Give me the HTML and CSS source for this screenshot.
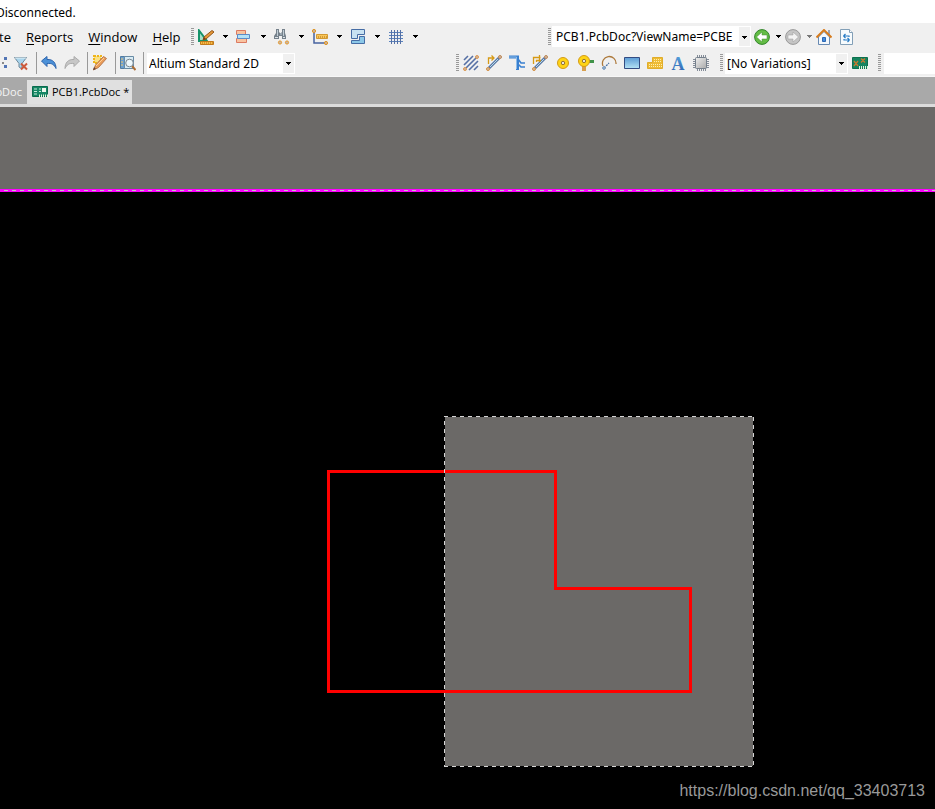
FILE: index.html
```html
<!DOCTYPE html>
<html lang="en">
<head>
<meta charset="utf-8">
<meta name="viewport" content="width=device-width, initial-scale=1">
<title>PCB1.PcbDoc</title>
<link rel="stylesheet" href="styles.css">
</head>
<body>
<svg class="defs" aria-hidden="true">
  <defs>
    <linearGradient id="blue" x1="0" y1="0" x2="0" y2="1"><stop offset="0" stop-color="#5b9bd5"/><stop offset="1" stop-color="#b5e3f5"/></linearGradient>
    <linearGradient id="ink" x1="0" y1="0" x2="0" y2="1"><stop offset="0" stop-color="#5aa7e0"/><stop offset="1" stop-color="#2b5fae"/></linearGradient>
    <linearGradient id="silver" x1="0" y1="0" x2="1" y2="1"><stop offset="0" stop-color="#eee"/><stop offset="1" stop-color="#aaa"/></linearGradient>
    <symbol id="arrow" viewBox="0 0 5 3"><path d="M0 0h5v1H4v1H3v1H2V2H1V1H0z" fill="currentColor"/></symbol>
  </defs>
</svg>

<header class="title">Disconnected.</header>

<div class="bar menubar">
  <nav class="menus" aria-label="Main menu">
    <button class="menu first">te</button>
    <button class="menu"><u>R</u>eports</button>
    <button class="menu"><u>W</u>indow</button>
    <button class="menu"><u>H</u>elp</button>
  </nav>
  <span class="grip"></span>
  <div class="tools split">
    <button class="tool" aria-label="Place drawing"><svg class="icon" viewBox="0 0 16 16"><path d="M1 1.500V12h8z" fill="#a7dfc8" stroke="#16936a" stroke-width="2"/><path d="M5 11l1-3 8-6.500 2 1.500-8 7z" fill="#e79a37" stroke="#92551b"/><path d="M5 11l1-3 2 2z" fill="#704018"/><path d="M2.500 12.500h13v3h-13z" fill="#f7bc45" stroke="#c37a1a"/><path d="M4 14h11" stroke="#b46b16" stroke-dasharray="1 1"/></svg><svg class="arrow"><use href="#arrow"/></svg></button>
    <button class="tool" aria-label="Align"><svg class="icon" viewBox="0 0 16 16"><path d="M.5 1.500h9v4h-9zM.5 9.500h10v4h-10z" fill="#f9c3a0" stroke="#dc7a62"/><path d="M1.500 5.500h12v4h-12z" fill="#b5e2f7" stroke="#5b8cc9"/></svg><svg class="arrow"><use href="#arrow"/></svg></button>
    <button class="tool" aria-label="Find selections"><svg class="icon" viewBox="0 0 16 16"><path d="M2 0h3v3l1 1h1l1-1V0h3v4l1 3v3H8V7H5v3H0V7l2-3z" fill="#75818b"/><path d="M3.500 1v6M9.500 1v6M6 5h2" stroke="#c0ccd4"/><path d="M1 8.500h3M9 8.500h2" stroke="#dde3e8"/><circle cx="6" cy="13.500" r="1.600" fill="#c7b4ad" stroke="#e59a27"/><circle cx="13" cy="13.500" r="1.600" fill="#c7b4ad" stroke="#e59a27"/></svg><svg class="arrow"><use href="#arrow"/></svg></button>
    <button class="tool" aria-label="Place dimension"><svg class="icon" viewBox="0 0 16 16"><path d="M2 3v11h11" fill="none" stroke="#4763a0" stroke-width="1.500"/><path d="M4.500 5.500h11v4h-11z" fill="#f9c75a" stroke="#d39a33"/><path d="M6 8h9" stroke="#a86c19" stroke-dasharray="1 1"/><circle cx="2" cy="2" r="1.600" fill="#d0b49c" stroke="#dc9424"/><circle cx="14" cy="14" r="1.600" fill="#d0b49c" stroke="#dc9424"/></svg><svg class="arrow"><use href="#arrow"/></svg></button>
    <button class="tool" aria-label="Place room"><svg class="icon" viewBox="0 0 16 16"><path d="M1.500.5h13v5h-7v4h-6z" fill="#c8e2f2" stroke="#466da5"/><path d="M9.500 7.500h5v7h-13v-3h8z" fill="#8cc8e8" stroke="#466da5"/></svg><svg class="arrow"><use href="#arrow"/></svg></button>
    <button class="tool" aria-label="Grid"><svg class="icon" viewBox="0 0 16 16"><path d="M1 3.500h14M1 6.500h14M1 9.500h14M1 12.500h14" stroke="#5b83bd"/><path d="M3.500 1v14M6.500 1v14M9.500 1v14M12.500 1v14" stroke="#5570a5"/></svg><svg class="arrow"><use href="#arrow"/></svg></button>
  </div>
  <div class="right address">
    <span class="grip"></span>
    <label class="combo location"><select aria-label="Location"><option>PCB1.PcbDoc?ViewName=PCBE</option></select><svg class="arrow"><use href="#arrow"/></svg></label>
    <button class="tool nav" aria-label="Back"><svg class="icon" viewBox="0 0 16 16"><circle cx="8" cy="8" r="7.400" fill="#64bd45" stroke="#33862c"/><path d="M2.500 8L8 3v3h5v4H8v3z" fill="#fff" stroke="#458f35" stroke-width=".5"/></svg><svg class="arrow"><use href="#arrow"/></svg></button>
    <button class="tool nav dim" aria-label="Forward"><svg class="icon" viewBox="0 0 16 16"><circle cx="8" cy="8" r="7.400" fill="#c5c5c5" stroke="#999"/><path d="M13.500 8L8 3v3H3v4h5v3z" fill="#f3f3f3" stroke="#999" stroke-width=".5"/></svg><svg class="arrow"><use href="#arrow"/></svg></button>
    <button class="tool home" aria-label="Home"><svg class="icon" viewBox="0 0 16 16"><path d="M12 1h2v6h-2z" fill="#9aa5b8"/><path d="M2.500 8v7.500h11V8L8 2.500z" fill="#f3f7fb" stroke="#6789b2"/><path d="M.5 8.500L8 1l7.500 7.500" fill="none" stroke="#d67b1d" stroke-width="2"/><path d="M6.500 8.500h3v4h-3z" fill="#458bdc" stroke="#2c68b4"/></svg></button>
    <button class="tool" aria-label="Refresh"><svg class="icon" viewBox="0 0 16 16"><path d="M1.500.5h9l3 3v12h-12z" fill="#f7fbfd" stroke="#829fb7"/><path d="M10.500.5v3h3" fill="#fff" stroke="#829fb7"/><path d="M4.500 7H10v1M4.500 7l2-2M4.500 7l2 2M10.500 11H5v-1M10.500 11l-2-2M10.500 11l-2 2" fill="none" stroke="#267bc5" stroke-width="1.200"/></svg></button>
  </div>
</div>

<div class="bar toolbar">
  <div class="editing">
    <button class="tool clip" aria-label="Select"><svg class="icon" viewBox="0 0 16 16"><path d="M9 8h2" stroke="#222"/><path d="M11 2h3v3h-3zM11 10h3v3h-3z" fill="#5275b5"/></svg></button>
    <button class="tool" aria-label="Clear filter"><svg class="icon" viewBox="0 0 16 16"><path d="M1.500 2.500h12L9 8.500V14l-3-2V8.500z" fill="#a9d5ed" stroke="#6d8799"/><path d="M2 3h11" stroke="#e5f1f6"/><path d="M8 8.500l6 6M14 8.500l-6 6" stroke="#cc5a3c" stroke-width="2"/></svg></button>
    <span class="rule"></span>
    <button class="tool" aria-label="Undo"><svg class="icon" viewBox="0 0 16 16"><path d="M.5 6L6 1.500v3c6-.5 9 3.500 9 9-2-4-4-5.500-9-5v3z" fill="#4c91d8" stroke="#2e65ad"/></svg></button>
    <button class="tool redo" aria-label="Redo"><svg class="icon" viewBox="0 0 16 16"><path d="M15.500 6L10 1.500v3c-6-.5-9 3.500-9 9 2-4 4-5.500 9-5v3z" fill="#c7c7c7" stroke="#aaa"/></svg></button>
    <span class="rule"></span>
    <button class="tool" aria-label="Highlight"><svg class="icon" viewBox="0 0 16 16"><path d="M2 1h7v7H2z" fill="#fae184" stroke="#eeb51b" stroke-width="2" stroke-dasharray="2 1"/><path d="M1.500 15l2-5 8-8.500 3 2-8 9z" fill="#eb9d58" stroke="#b87a50"/><path d="M4 11l8-8" stroke="#ffd099"/><path d="M1 15l1-3 2 2z" fill="#65453b"/></svg></button>
    <span class="rule"></span>
    <button class="tool" aria-label="Browse"><svg class="icon" viewBox="0 0 16 16"><path d="M.5 1.500h11v12H.5z" fill="#6c9fd0" stroke="#517b9f"/><path d="M4.500 1.500h9v12h-9z" fill="#d9ecf5" stroke="#688ba5"/><path d="M2 3v9" stroke="#f3c869" stroke-dasharray="2 1"/><path d="M12 11l3.500 4" stroke="#ab6d35" stroke-width="2"/><circle cx="9.500" cy="8" r="3.800" fill="#eef8fc" stroke="#7a858f"/></svg></button>
    <span class="rule"></span>
    <label class="combo view"><select aria-label="View configuration"><option>Altium Standard 2D</option></select><svg class="arrow"><use href="#arrow"/></svg></label>
  </div>
  <div class="right placing">
    <span class="grip"></span>
    <div class="tools wiring">
      <button class="tool" aria-label="Route lines"><svg class="icon" viewBox="0 0 16 16"><path d="M1 5l4-4M1 10l9-9M3 13L13 3M6 15l9-9M11 15l4-4" stroke="#5670a5" stroke-width="1.600"/><circle cx="14" cy="2" r="1.500" fill="#cfb4a6" stroke="#db9850"/><circle cx="2" cy="14" r="1.500" fill="#cfb4a6" stroke="#db9850"/></svg></button>
      <button class="tool" aria-label="Interactive route"><svg class="icon" viewBox="0 0 16 16"><path d="M3 13L13 3" stroke="#5b79a7" stroke-width="3"/><path d="M4 12l8-8" stroke="#b6dbe8"/><path d="M2.500 9V3H8M5.500.5L8 3 5.500 5.500" fill="none" stroke="#d69a16" stroke-width="1.300"/><circle cx="14" cy="2" r="1.500" fill="#d1baa8" stroke="#bb8654"/><circle cx="2" cy="14" r="1.500" fill="#d1baa8" stroke="#d38f3f"/></svg></button>
      <button class="tool" aria-label="Route pair"><svg class="icon" viewBox="0 0 16 16"><path d="M0 2h8.500v13" fill="none" stroke="#3a80d0" stroke-width="3"/><path d="M9 4l3 4h4M9 9l3 3h4" fill="none" stroke="#3a80d0" stroke-width="1.600"/><path d="M0 2h7.500v12" fill="none" stroke="#8dbdea"/></svg></button>
      <button class="tool" aria-label="Route multiple"><svg class="icon" viewBox="0 0 16 16"><path d="M3 13L13 3" stroke="#5b79a7" stroke-width="3"/><path d="M4 12l8-8" stroke="#b6dbe8"/><path d="M1.500 9V2.500h7M4.500 7V5.500H9M7.500 0v7" fill="none" stroke="#d69a16" stroke-width="1.300"/><circle cx="14" cy="2" r="1.500" fill="#d1baa8" stroke="#bb8654"/><circle cx="2" cy="14" r="1.500" fill="#d1baa8" stroke="#d38f3f"/></svg></button>
      <button class="tool" aria-label="Pad"><svg class="icon" viewBox="0 0 16 16"><circle cx="8" cy="8" r="5.500" fill="#ffd415" stroke="#d39b17"/><circle cx="8" cy="8" r="1.700" fill="#e8e6df" stroke="#967434"/></svg></button>
      <button class="tool" aria-label="Via"><svg class="icon" viewBox="0 0 16 16"><path d="M8 6.500h8" stroke="#409349" stroke-width="3"/><path d="M6 10v6" stroke="#d9a04e" stroke-width="4"/><circle cx="6" cy="6" r="5.500" fill="#ffd415" stroke="#d39b17"/><circle cx="6" cy="6" r="1.700" fill="#e8e6df" stroke="#967434"/></svg></button>
      <button class="tool" aria-label="Arc"><svg class="icon" viewBox="0 0 16 16"><path d="M2 11A6.800 6.800 0 1 1 15 9" fill="none" stroke="#ad793b" stroke-width="1.300"/><path d="M3 13l5-5" stroke="#466da0" stroke-width="1.300" stroke-dasharray="2 1"/><circle cx="3" cy="13" r="1.300" fill="#b7d8eb" stroke="#5e82b0"/></svg></button>
      <button class="tool" aria-label="Fill"><svg class="icon" viewBox="0 0 16 16"><path d="M.5 2.500h15v11H.5z" fill="url(#blue)" stroke="#334c83"/></svg></button>
      <button class="tool" aria-label="Polygon"><svg class="icon" viewBox="0 0 16 16"><path d="M.5 7.500h5v-5h10v11H.5z" fill="#eebb35" stroke="#e0ad2b"/><path d="M2 9.500h13M2 11.500h13M7 4.500h8M7 6.500h8" stroke="#fff0ad" stroke-dasharray="1 1"/></svg></button>
      <button class="tool" aria-label="Text"><svg class="icon letter" viewBox="0 0 16 16"><text x="8" y="15" text-anchor="middle">A</text></svg></button>
      <button class="tool" aria-label="Component"><svg class="icon" viewBox="0 0 16 16"><path d="M4.500 0v16M6.500 0v16M8.500 0v16M10.500 0v16M12.500 0v16M0 4.500h16M0 6.500h16M0 8.500h16M0 10.500h16M0 12.500h16" stroke="#848c98"/><rect x="2.500" y="2.500" width="11" height="11" rx="1" fill="url(#silver)" stroke="#75808c"/></svg></button>
    </div>
    <span class="grip"></span>
    <label class="combo variations"><select aria-label="Variations"><option>[No Variations]</option></select><svg class="arrow"><use href="#arrow"/></svg></label>
    <button class="tool board" aria-label="Board variants"><svg class="icon" viewBox="0 0 16 16"><path d="M.5 2.500h15v11H.5z" fill="#15845f" stroke="#0c714e"/><path d="M2 6l4 5M6 6l-4 5M9 3.500l4 4M13 3.500l-4 4" stroke="#c9782e" stroke-width="1.300"/><path d="M7 12.500h9" stroke="#e1f2dc" stroke-width="3" stroke-dasharray="1 1"/></svg></button>
    <span class="grip"></span>
    <input class="filter" type="text" aria-label="Filter">
  </div>
</div>

<nav class="tabs" aria-label="Open documents">
  <button class="tab previous">bDoc</button>
  <button class="tab active"><svg class="icon" viewBox="0 0 16 16"><path d="M.5 2.500h15v10H.5z" fill="#168765" stroke="#0a6b4d"/><path d="M2 5h3M2 7.500h3M2 10h3M7 5h2M7 7.500h2" stroke="#caeada"/><path d="M10 4h4v4h-4z" fill="#eef7ec"/><path d="M7 12h9" stroke="#e9f3df" stroke-width="3" stroke-dasharray="1 1"/></svg>PCB1.PcbDoc *</button>
</nav>

<main class="workspace">
  <svg class="drawing" role="img" aria-label="Board outline">
    <rect class="sheet" width="100%" height="83"/>
    <path class="edge" d="M0 83.500h6000"/>
    <path class="edge-dash" d="M4 83.500h6000"/>
    <rect class="sheet" x="445" y="310" width="308" height="349"/>
    <path class="outline" d="M328.500 364.500h227v117h135v103h-362z"/>
    <path class="marquee" d="M444 309.500h310M444 659.500h310"/>
    <path class="marquee" d="M444.500 314v346M753.500 310v350"/>
  </svg>
  <div class="watermark">https://blog.csdn.net/qq_33403713</div>
</main>
</body>
</html>
```
FILE: styles.css
```css
* { box-sizing: border-box; }

body {
  display: flex;
  flex-direction: column;
  min-height: 100vh;
  margin: 0;
  overflow-x: hidden;
  background: #000;
  color: #000;
  font: 12px/20px "Noto Sans", sans-serif;
}

button, select, input {
  margin: 0;
  padding: 0;
  border: 0;
  border-radius: 0;
  background: none;
  color: inherit;
  font: inherit;
}

.defs { position: absolute; width: 0; height: 0; }

.title {
  height: 23px;
  padding-top: 3px;
  margin-left: -4px;
  background: #fff;
}

.bar {
  display: flex;
  align-items: center;
  height: 27px;
  background: #f0f0f0;
}

.toolbar { border-bottom: 1px solid #f7f7f7; }

.menus { display: flex; gap: 15px; width: 191px; flex: none; font-family: "Open Sans", sans-serif; font-size: 13px; }
.menu.first { width: 11px; text-align: left; direction: rtl; }
.menu { line-height: 20px; white-space: nowrap; }
u { text-underline-offset: 2px; }

.grip {
  flex: none;
  width: 3px;
  height: 18px;
  background: repeating-linear-gradient(#999 0 1px, #f0f0f0 1px 2px);
}

.tools { display: flex; }
.tool { display: flex; align-items: center; flex: none; }
.icon { display: block; flex: none; width: 16px; height: 16px; }
.arrow { display: block; width: 5px; height: 3px; }
.letter { font: bold 18px "Liberation Serif", serif; fill: url(#ink); }

.split { margin-left: 4px; }
.split .tool { width: 38px; gap: 9px; }

.right { display: flex; align-items: center; flex: 1; min-width: 0; }
.address { margin-left: 122px; }

.combo {
  display: grid;
  grid-template-columns: 1fr 12px;
  align-items: center;
  flex: none;
  height: 21px;
  background: linear-gradient(to left, #f0f0f0 11px, #fff 11px);
  border: 1px solid #fff;
}

.combo select {
  appearance: none;
  grid-area: 1 / 1 / 2 / 3;
  width: 100%;
  padding: 0 12px 0 1px;
  overflow: hidden;
}

.combo .arrow { grid-area: 1 / 2; justify-self: center; pointer-events: none; }

.location { width: 199px; margin: 0 3px 0 1px; }
.location select { padding-left: 3px; }
.nav { gap: 6px; width: 31px; }
.dim .arrow { color: #777; }
.home { margin-right: 7px; }

.editing { display: flex; align-items: center; width: 295px; flex: none; }
.editing .tool { margin-right: 4px; }
.clip { width: 9px; justify-content: flex-end; overflow: hidden; }
.editing .redo { margin: 0 4px 0 3px; }
.rule { flex: none; width: 1px; height: 22px; margin: 0 4px 0 3px; background: #999; }
.rule:nth-last-of-type(1) { margin-right: 3px; }
.view { flex: 1; }

.placing { margin-left: 161px; }
.wiring { gap: 7px; margin: 0 11px 0 4px; }
.variations { width: 123px; margin: 0 4px 0 2px; }
.board { margin-right: 10px; }
.filter { flex: 1; min-width: 0; height: 21px; margin-left: 3px; background: #fff; }

.tabs {
  display: flex;
  height: 30px;
  padding-top: 3px;
  border-bottom: 3px solid #dcdcdc;
  background: #a9a9a9;
  font-family: "Open Sans", sans-serif;
  font-size: 11px;
}

.tab { display: flex; align-items: center; gap: 4px; white-space: nowrap; }
.previous { justify-content: flex-end; width: 27px; padding-right: 5px; overflow: hidden; color: #f5f5f5; }
.active { padding: 0 3px 0 5px; background: #e0e0e0; }

.workspace { position: relative; display: flex; flex: 1; min-height: 702px; }
.drawing { display: block; flex: 1; width: 100%; min-height: 100%; }

.sheet { fill: #6b6967; }
.edge { stroke: #f0f; stroke-width: 3; }
.edge-dash { stroke: #c5c5c5; stroke-dasharray: 4 4; }
.outline { fill: none; stroke: #f00; stroke-width: 3; }
.marquee { fill: none; stroke: #d5d5d5; stroke-dasharray: 4 4; }

.watermark {
  position: absolute;
  right: 10px;
  bottom: 8px;
  color: #999;
  font: 16px/20px "Liberation Sans", Arial, sans-serif;
}
```
